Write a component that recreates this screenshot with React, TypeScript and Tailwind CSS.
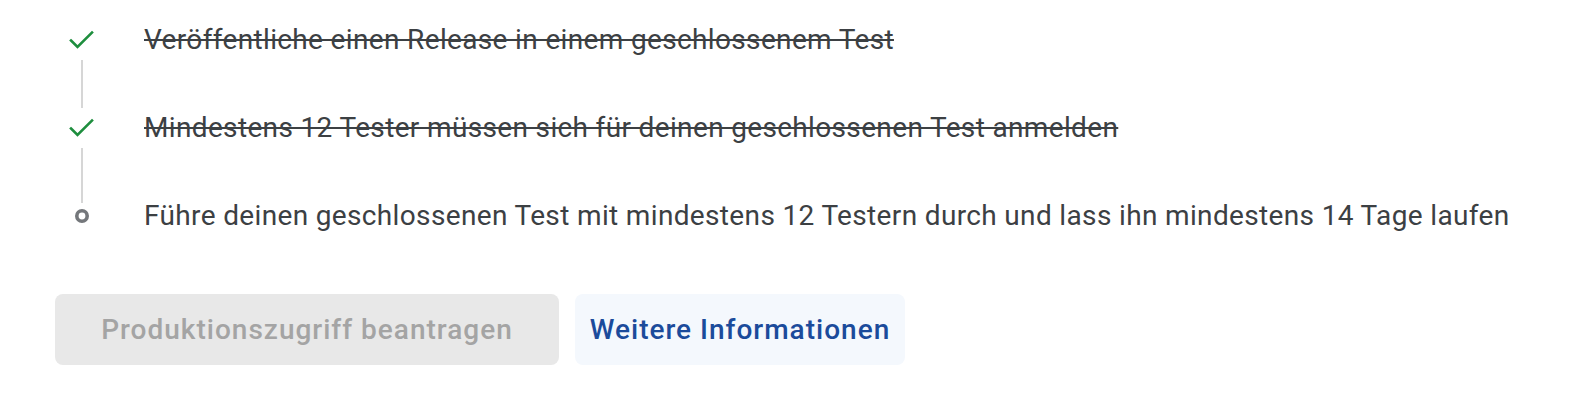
import React from "react";

function Check() {
  return (
    <svg width="28" height="24" viewBox="0 0 28 24" fill="none">
      <path d="M3 12.5 L9.5 19 L24 4.5" stroke="#1e8e3e" strokeWidth="2.6" strokeLinecap="square" />
    </svg>
  );
}

function Circle() {
  return (
    <svg width="16" height="16" viewBox="0 0 16 16" fill="none">
      <circle cx="8" cy="8" r="5.2" stroke="#74777b" strokeWidth="3.6" />
    </svg>
  );
}

type Step = { text: string; done: boolean };

const steps: Step[] = [
  { text: "Veröffentliche einen Release in einem geschlossenem Test", done: true },
  { text: "Mindestens 12 Tester müssen sich für deinen geschlossenen Test anmelden", done: true },
  { text: "Führe deinen geschlossenen Test mit mindestens 12 Testern durch und lass ihn mindestens 14 Tage laufen", done: false },
];

export default function App() {
  return (
    <div className="w-[1574px] h-[406px] bg-white pl-[55px] pt-[28px]" style={{ fontFamily: "Roboto, 'Liberation Sans', sans-serif" }}>
      <div className="flex flex-col">
        {steps.map((s, i) => {
          const last = i === steps.length - 1;
          return (
            <div key={i} className={`flex ${last ? "" : "h-[88px]"}`}>
              <div className="ml-[13px] w-[28px] flex flex-col items-center">
                <div className="h-[24px] w-[28px] flex items-center justify-center">
                  {s.done ? <Check /> : <Circle />}
                </div>
                {!last && (
                  <div className={`w-[2px] flex-1 bg-[#d6d6d6] mt-[8px] ${i === 0 ? "mb-[8px]" : "mb-[1px]"}`} />
                )}
              </div>
              <div
                className={`ml-[48px] h-[24px] flex items-center text-[28px] leading-[24px] tracking-[0.35px] text-[#3c4043] whitespace-nowrap ${
                  s.done ? "line-through decoration-[#3c4043] decoration-[2px]" : ""
                }`}
              >
                {s.text}
              </div>
            </div>
          );
        })}
      </div>
      <div className="flex gap-[16px] mt-[66px]">
        <button className="w-[504px] h-[71px] rounded-[8px] bg-[#e8e8e8] text-[#a4a4a4] text-[28px] font-medium tracking-[1px] flex items-center justify-center">
          Produktionszugriff beantragen
        </button>
        <button className="w-[330px] h-[71px] rounded-[8px] bg-[#f4f8fd] text-[#1b4b9b] text-[28px] font-medium tracking-[1px] flex items-center justify-center">
          Weitere Informationen
        </button>
      </div>
    </div>
  );
}
